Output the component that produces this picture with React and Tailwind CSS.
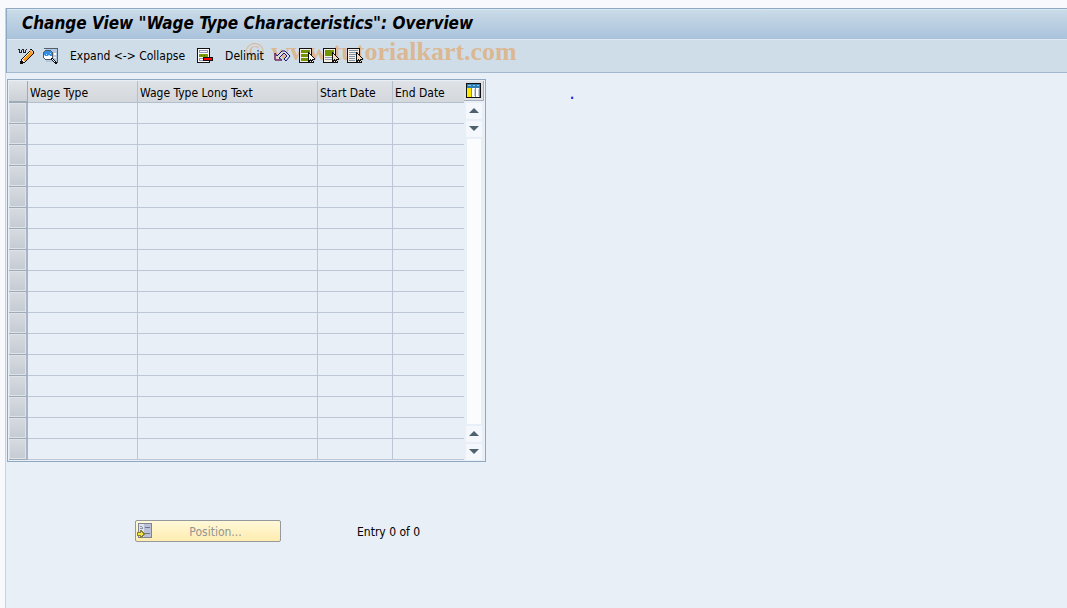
import React, { useState } from "react";

const rows = Array.from({ length: 17 }, (_, i) => i + 1);

const columns = [
  { label: "Wage Type", width: "w-[110px]" },
  { label: "Wage Type Long Text", width: "w-[180px]" },
  { label: "Start Date", width: "w-[75px]" },
  { label: "End Date", width: "w-[71px]" },
];

function ChangeIcon() {
  return (
    <svg width="16" height="16" viewBox="0 0 16 16" shapeRendering="crispEdges">
      <path d="M0 1h2v1h-2zM1 2h1v3h-1zM2 4h2v1h-2zM3 2h1v3h-1zM4 1h2v1h-2zM5 2h1v3h-1zM6 4h2v1h-2zM7 2h1v2h-1zM8 1h1v1h-1z" fill="#222" />
      <path d="M12 1h2v1h1v1h1v3h-1v1h-1v1h-1v1h-1v1h-1v1h-1v1h-1v1h-1v1h-1v1h-2v1h-3v-3h1v-2h1v-1h1v-1h1v-1h1v-1h1v-1h1v-1h1v-1h1v-1h1z" fill="#111" />
      <path d="M12 3h1v1h1v1h1v1h-1v1h-1v1h-1v1h-1v1h-1v1h-1v1h-1v1h-1v1h-1v-1h-1v-1h-1v-1h1v-1h1v-1h1v-1h1v-1h1v-1h1v-1h1v-1h1z" fill="#f39a1e" />
      <path d="M11 4h1v1h-1v1h-1v1h-1v1h-1v1h-1v1h-1v1h-1v-1h1v-1h1v-1h1v-1h1v-1h1v-1h1z" fill="#fff2b8" />
      <path d="M12 2h2v1h1v2h-1v-1h-1v-1h-1z" fill="#f0b898" />
      <path d="M4 11h1v1h1v1h1v1h-2v-1h-1z" fill="#f7e6d5" />
    </svg>
  );
}

function DetailsIcon() {
  return (
    <svg width="16" height="16" viewBox="0 0 16 16" shapeRendering="crispEdges">
      <path d="M4 1h11v13h-11z" fill="#b3c8de" />
      <path d="M2 0h14v15h-4v-1h3v-13h-13z" fill="#51606f" />
      <path d="M12 5h2v2h-2zM12 9h2v1h-2z" fill="#fff" />
      <circle cx="6" cy="7" r="5" fill="#fff" stroke="#4d5b68" />
      <path d="M3 3h6v1h1v4h-8v-4h1z" fill="#2f8fe8" />
      <path d="M4 6h1v1h-1zM6 7h2v1h-2zM2 7h1v1h-1zM8 5h1v1h-1z" fill="#bfe0ff" />
      <path d="M9 10h2v1h1v1h1v1h1v1h1v2h-2v-1h-1v-1h-1v-1h-1v-1h-1z" fill="#111" />
      <path d="M10 11h1v1h1v1h1v1h-1v-1h-1v-1h-1z" fill="#eee" />
    </svg>
  );
}

function DelimitIcon() {
  return (
    <svg width="16" height="16" viewBox="0 0 16 16" shapeRendering="crispEdges">
      <path d="M0 0h13v15h-13z" fill="#111" />
      <path d="M1 1h11v13h-11z" fill="#fff" />
      <path d="M2 2h9v3h-9zM2 10h5v3h-5z" fill="#9494ba" />
      <path d="M3 3h7v1h-7zM3 11h4v1h-4z" fill="#fff" />
      <path d="M2 6h9v3h-9z" fill="#7a9e00" />
      <path d="M4 7h1v1h-1zM7 7h1v1h-1z" fill="#4c6400" />
      <path d="M6 9h10v4h-10z" fill="#111" />
      <path d="M7 10h8v2h-8z" fill="#f00" />
    </svg>
  );
}

function UndoIcon() {
  return (
    <svg width="17" height="14" viewBox="0 0 17 14">
      <path d="M1 4v7h7l-3-2 5-5 3 3-3 3 2 2 4-5-5-5h-3l-5 5z" fill="#e8ebf2" fillOpacity="0.6" stroke="#15157c" />
      <path d="M1 4v7h7" fill="none" stroke="#a03050" />
    </svg>
  );
}

function SelectIcon({ kind }) {
  return (
    <svg width="16" height="16" viewBox="0 0 16 16" shapeRendering="crispEdges">
      <path d="M0 0h13v15h-13z" fill="#111" />
      <path d="M1 1h11v13h-11z" fill="#f7efe6" />
      {kind === "all" && <path d="M2 2h9v3h-9zM2 6h9v3h-9zM2 10h9v3h-9z" fill="#6f9400" />}
      {kind === "block" && <path d="M2 2h9v6h-9z" fill="#6f9400" />}
      {kind === "block" && <path d="M2 9h7v1h-7zM2 11h7v1h-7z" fill="#8d9db8" />}
      {kind === "none" && (
        <path d="M2 2h9v1h-9zM2 4h9v1h-9zM2 6h9v1h-9zM2 8h6v1h-6zM2 10h6v1h-6zM2 12h6v1h-6z" fill="#7c94a9" />
      )}
      <path d="M9 4h1v1h1v1h1v1h1v1h1v1h1v1h1v2h-2v1h1v2h-3v-2h-1v1h-2z" fill="#111" />
      <path d="M10 6h1v1h1v1h1v1h1v1h1v1h-2v2h1v1h-1v-2h-1v-1h-1v1h-1z" fill={kind === "all" ? "#fff" : "#f3d9be"} />
    </svg>
  );
}

function ConfigIcon() {
  return (
    <svg width="15" height="15" viewBox="0 0 15 15" shapeRendering="crispEdges">
      <path d="M0 0h15v15h-15z" fill="#111" />
      <path d="M1 1h13v13h-13z" fill="#fff" />
      <path d="M1 1h13v4h-13z" fill="#2d7fb8" />
      <path d="M2 2h3v1h-3zM7 2h2v1h-2zM11 2h2v1h-2z" fill="#8cc4e8" />
      <path d="M1 5h4v9h-4z" fill="#ffe900" />
      <path d="M5 5h1v9h-1zM9 5h1v9h-1zM13 5h1v9h-1z" fill="#888" />
      <path d="M8 6h1v7h-1zM12 6h1v7h-1z" fill="#c5ccd3" />
    </svg>
  );
}

function PositionIcon() {
  return (
    <svg width="16" height="16" viewBox="0 0 16 16" shapeRendering="crispEdges">
      <path d="M1 0h14v15h-14z" fill="#7d8592" />
      <path d="M2 1h12v13h-12z" fill="#dfe3ee" />
      <path d="M7 1h7v13h-7z" fill="#b9c0d8" />
      <path d="M8 4h5v1h-5zM8 10h5v1h-5z" fill="#6f7788" />
      <path d="M3 3h2v1h1v2h-3v-1h2v-1h-2z" fill="#8c93a0" />
      <path d="M0 9h3v-2h1l4 4-4 4h-1v-2h-3z" fill="#86803c" />
      <path d="M1 10h3v-1l2 2-2 2v-1h-3z" fill="#f5e640" />
    </svg>
  );
}

function ScrollButton({ label, up }) {
  return (
    <button type="button" aria-label={label} className="flex h-4 w-4 items-center justify-center bg-[#f4f7fb] pb-0.5">
      <svg width="10" height="5" viewBox="0 0 10 5">
        <path d={up ? "M0 5L5 0L10 5z" : "M0 0L5 5L10 0z"} fill="#4f606f" />
      </svg>
    </button>
  );
}

function Toolbar() {
  return (
    <div className="relative isolate flex h-[34px] items-center border-b border-t border-b-[#a3b8cd] border-t-[#dfe9f2] bg-[#cfdde8] pb-px pl-[11px]">
      <button type="button" aria-label="Display/Change"><ChangeIcon /></button>
      <button type="button" aria-label="Details" className="ml-2"><DetailsIcon /></button>
      <button type="button" className="ml-3">Expand &lt;-&gt; Collapse</button>
      <button type="button" className="ml-3 flex items-center gap-3"><DelimitIcon />Delimit</button>
      <button type="button" aria-label="Undo" className="ml-2.5"><UndoIcon /></button>
      <button type="button" aria-label="Select All" className="ml-2"><SelectIcon kind="all" /></button>
      <button type="button" aria-label="Select Block" className="ml-2"><SelectIcon kind="block" /></button>
      <button type="button" aria-label="Deselect All" className="ml-2"><SelectIcon kind="none" /></button>
      <span className="pointer-events-none absolute left-[238px] top-0 -z-10 whitespace-nowrap font-['Liberation_Serif',serif] text-[26px] leading-6 text-[#e8913c]/50">
        © <b>www.tutorialkart.com</b>
      </span>
    </div>
  );
}

function WageTable() {
  const [selected, setSelected] = useState([]);

  const toggleRow = (row) => {
    setSelected((prev) => (prev.includes(row) ? prev.filter((r) => r !== row) : [...prev, row]));
  };

  return (
    <div className="flex border border-[#8fa9c3] pb-px pl-px pr-px pt-px">
      <table className="table-fixed border-separate border-spacing-0">
        <thead>
          <tr>
            <th className="h-[22px] w-[19px] border-b-2 border-r border-[#9dabb9] bg-linear-to-b from-[#e1e4e8] to-[#ccd1d7] p-0" />
            {columns.map((col) => (
              <th
                key={col.label}
                className={`${col.width} h-[22px] whitespace-nowrap border-b border-r border-[#b4bfcd] bg-linear-to-b from-[#dfe2e6] to-[#d3d8dd] p-0 pl-0.5 pt-0.5 text-left font-normal last:border-r-0`}
              >
                {col.label}
              </th>
            ))}
          </tr>
        </thead>
        <tbody>
          {rows.map((row) => (
            <tr key={row}>
              <td className="h-[21px] border-b border-r-2 border-b-[#9dabb9] border-r-[#a9b4c6] p-0">
                <button
                  type="button"
                  aria-label={`Select row ${row}`}
                  aria-pressed={selected.includes(row)}
                  onClick={() => toggleRow(row)}
                  className="block h-5 w-full border border-[#dfe3e8] bg-linear-to-b from-[#d6dae0] to-[#c6ccd4] aria-pressed:bg-[#f5d67a]"
                />
              </td>
              {columns.map((col) => (
                <td key={col.label} className="h-[21px] border-b border-r border-[#bcc6d4] p-0 last:border-r-0" />
              ))}
            </tr>
          ))}
        </tbody>
      </table>
      <div className="flex w-5 flex-col items-center gap-0.5">
        <button type="button" aria-label="Table Settings" className="flex h-5 w-full items-center justify-center border-b border-r border-[#a8b1bb] bg-[#dde1e6]">
          <ConfigIcon />
        </button>
        <ScrollButton label="Scroll up" up />
        <ScrollButton label="Page down" />
        <div className="w-3.5 grow bg-[#fbfcfe]" />
        <ScrollButton label="Page up" up />
        <ScrollButton label="Scroll down" />
      </div>
    </div>
  );
}

function App() {
  return (
    <div className="min-h-screen bg-[#f7f9fc] pl-[5px] pt-2 font-['DejaVu_Sans_Condensed','DejaVu_Sans',sans-serif] text-xs text-black">
      <main className="min-h-[600px] border-l border-[#c5d3e1] bg-[#e8eff6]">
        <header className="border-l border-t border-[#8fa9c3]">
          <h1 className="flex h-[30px] items-center border-t border-[#dbe7f1] bg-linear-to-b from-[#cadbe8] to-[#a9c2db] pb-0.5 pl-[15px] text-[17px] font-bold italic">
            Change View "Wage Type Characteristics": Overview
          </h1>
          <Toolbar />
        </header>
        <div className="flex items-start pl-px pt-1.5">
          <WageTable />
          <span className="ml-[84px] mt-2 font-bold text-[#1a1ae0]">.</span>
        </div>
        <div className="flex items-center pl-[129px] pt-[58px]">
          <button
            type="button"
            className="flex h-[22px] w-[146px] items-center rounded-xs border border-[#96999c] bg-linear-to-b from-[#fff8d8] to-[#ffedb0] pl-px text-[#949494]"
          >
            <PositionIcon />
            <span className="grow pr-0.5 pt-0.5 text-center">Position...</span>
          </button>
          <span className="ml-[76px] pt-0.5">Entry 0 of 0</span>
        </div>
      </main>
    </div>
  );
}

export default App;
